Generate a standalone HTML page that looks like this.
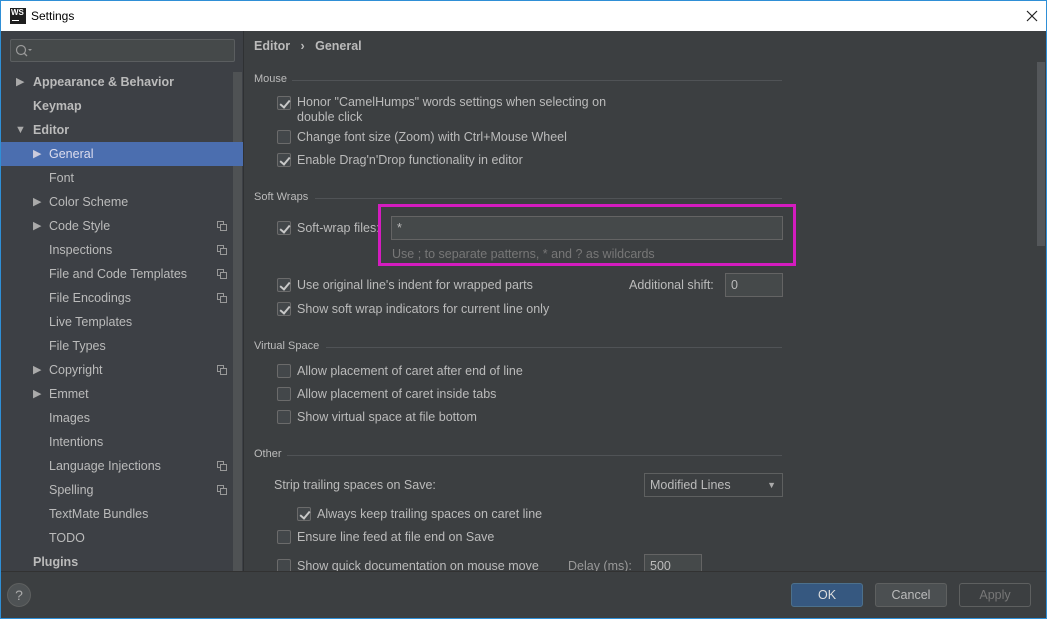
<!DOCTYPE html>
<html><head><meta charset="utf-8"><style>
*{margin:0;padding:0;box-sizing:border-box}
body{width:1047px;height:619px;overflow:hidden;background:#3c3f41;font-family:"Liberation Sans",sans-serif;font-size:12.5px;color:#bbbbbb;position:relative}
.a{position:absolute;white-space:nowrap}
#title{left:0;top:0;width:1047px;height:31px;background:#fff;border:1px solid #2f8fd6;border-bottom:none}
#frame{left:0;top:0;width:1047px;height:619px;border:1px solid #2f8fd6;pointer-events:none}
#side{left:1px;top:31px;width:242px;height:540px;background:#3d4045}
.it{position:absolute;height:24px;line-height:24px;left:0;width:232px}
.arr{position:absolute;font-size:11px;color:#aaa}
.cp{position:absolute;left:216px;top:7px;width:10px;height:10px}
.cb{position:absolute;width:14px;height:14px;border:1px solid #6b6b6b;background:#43474a;border-radius:2px}
.cb.c::after{content:"";position:absolute;left:4px;top:1px;width:4px;height:8px;border:solid #c8c8c8;border-width:0 2px 2px 0;transform:rotate(40deg)}
.sec{position:absolute;left:254px;font-size:11px;color:#bbb}
.ln{position:absolute;height:1px;background:#505356}
.inp{position:absolute;border:1px solid #646464;background:#45494a;color:#bbb;padding-left:5px}
.btn{position:absolute;top:583px;height:24px;width:72px;border:1px solid #5e6060;border-radius:3px;background:#4b4f51;text-align:center;line-height:22px}
</style></head><body>
<div class="a" id="title">
 <div class="a" style="left:9px;top:7px;width:16px;height:16px;background:#1e1e1e;color:#fff;font-size:8px;font-weight:bold;line-height:10px;padding-left:1px">WS<div style="position:absolute;left:2px;top:12px;width:7px;height:1px;background:#fff"></div></div>
 <div class="a" style="left:30px;top:8px;color:#000;font-size:12px">Settings</div>
 <svg class="a" style="left:1025px;top:9px" width="12" height="12"><path d="M1 1L11 11M11 1L1 11" stroke="#222" stroke-width="1.2"/></svg>
</div>
<div class="a" id="side">
 <div class="a" style="left:9px;top:8px;width:225px;height:23px;border:1px solid #5b5e60;border-radius:2px;background:#45494a"></div>
 <svg class="a" style="left:14px;top:13px" width="18" height="14"><circle cx="6" cy="6" r="4.5" fill="none" stroke="#999" stroke-width="1.2"/><path d="M9 9L12 12" stroke="#999" stroke-width="1.3"/><path d="M13 5h4l-2 2z" fill="#999"/></svg>
 <div class="a" style="left:232px;top:41px;width:9px;height:499px;background:#4f5254"></div>
 <div class="a" style="left:0;top:111px;width:242px;height:24px;background:#4b6eaf"></div>
</div>
<div class="a" style="left:1px;top:70px;width:232px;font-size:12.5px">
 <div class="it" style="top:0"><span class="arr" style="left:15px">▶</span><b style="position:absolute;left:32px">Appearance &amp; Behavior</b></div>
 <div class="it" style="top:24px"><b style="position:absolute;left:32px">Keymap</b></div>
 <div class="it" style="top:48px"><span class="arr" style="left:14px">▼</span><b style="position:absolute;left:32px">Editor</b></div>
 <div class="it" style="top:72px"><span class="arr" style="left:32px;color:#ccd">▶</span><span style="position:absolute;left:48px;color:#dde">General</span></div>
 <div class="it" style="top:96px"><span style="position:absolute;left:48px">Font</span></div>
 <div class="it" style="top:120px"><span class="arr" style="left:32px">▶</span><span style="position:absolute;left:48px">Color Scheme</span></div>
 <div class="it" style="top:144px"><span class="arr" style="left:32px">▶</span><span style="position:absolute;left:48px">Code Style</span><svg class="cp"><rect x=".5" y=".5" width="6" height="6" fill="none" stroke="#999"/><rect x="3.5" y="3.5" width="6" height="6" fill="#3d4045" stroke="#999"/></svg></div>
 <div class="it" style="top:168px"><span style="position:absolute;left:48px">Inspections</span><svg class="cp"><rect x=".5" y=".5" width="6" height="6" fill="none" stroke="#999"/><rect x="3.5" y="3.5" width="6" height="6" fill="#3d4045" stroke="#999"/></svg></div>
 <div class="it" style="top:192px"><span style="position:absolute;left:48px">File and Code Templates</span><svg class="cp"><rect x=".5" y=".5" width="6" height="6" fill="none" stroke="#999"/><rect x="3.5" y="3.5" width="6" height="6" fill="#3d4045" stroke="#999"/></svg></div>
 <div class="it" style="top:216px"><span style="position:absolute;left:48px">File Encodings</span><svg class="cp"><rect x=".5" y=".5" width="6" height="6" fill="none" stroke="#999"/><rect x="3.5" y="3.5" width="6" height="6" fill="#3d4045" stroke="#999"/></svg></div>
 <div class="it" style="top:240px"><span style="position:absolute;left:48px">Live Templates</span></div>
 <div class="it" style="top:264px"><span style="position:absolute;left:48px">File Types</span></div>
 <div class="it" style="top:288px"><span class="arr" style="left:32px">▶</span><span style="position:absolute;left:48px">Copyright</span><svg class="cp"><rect x=".5" y=".5" width="6" height="6" fill="none" stroke="#999"/><rect x="3.5" y="3.5" width="6" height="6" fill="#3d4045" stroke="#999"/></svg></div>
 <div class="it" style="top:312px"><span class="arr" style="left:32px">▶</span><span style="position:absolute;left:48px">Emmet</span></div>
 <div class="it" style="top:336px"><span style="position:absolute;left:48px">Images</span></div>
 <div class="it" style="top:360px"><span style="position:absolute;left:48px">Intentions</span></div>
 <div class="it" style="top:384px"><span style="position:absolute;left:48px">Language Injections</span><svg class="cp"><rect x=".5" y=".5" width="6" height="6" fill="none" stroke="#999"/><rect x="3.5" y="3.5" width="6" height="6" fill="#3d4045" stroke="#999"/></svg></div>
 <div class="it" style="top:408px"><span style="position:absolute;left:48px">Spelling</span><svg class="cp"><rect x=".5" y=".5" width="6" height="6" fill="none" stroke="#999"/><rect x="3.5" y="3.5" width="6" height="6" fill="#3d4045" stroke="#999"/></svg></div>
 <div class="it" style="top:432px"><span style="position:absolute;left:48px">TextMate Bundles</span></div>
 <div class="it" style="top:456px"><span style="position:absolute;left:48px">TODO</span></div>
 <div class="it" style="top:480px"><b style="position:absolute;left:32px">Plugins</b></div>
</div>

<div class="a" style="left:243px;top:31px;width:1px;height:540px;background:#2f3133"></div>
<div class="a" style="left:254px;top:39px;font-weight:bold;font-size:12.5px">Editor &nbsp;&nbsp;›&nbsp;&nbsp; General</div>
<div class="a" style="left:1037px;top:62px;width:8px;height:184px;background:#54575a"></div>

<div class="sec" style="top:73px">Mouse</div><div class="ln" style="left:292px;top:80px;width:490px"></div>
<div class="cb c" style="left:277px;top:96px"></div><div class="a" style="left:297px;top:95px;line-height:15px">Honor "CamelHumps" words settings when selecting on<br>double click</div>
<div class="cb" style="left:277px;top:130px"></div><div class="a" style="left:297px;top:130px">Change font size (Zoom) with Ctrl+Mouse Wheel</div>
<div class="cb c" style="left:277px;top:153px"></div><div class="a" style="left:297px;top:153px">Enable Drag'n'Drop functionality in editor</div>

<div class="sec" style="top:191px">Soft Wraps</div><div class="ln" style="left:315px;top:198px;width:467px"></div>
<div class="cb c" style="left:277px;top:221px"></div><div class="a" style="left:297px;top:221px">Soft-wrap files:</div>
<div class="a" style="left:378px;top:204px;width:418px;height:62px;border:3px solid #d41cbf"></div>
<div class="inp" style="left:391px;top:216px;width:392px;height:24px;line-height:22px">*</div>
<div class="a" style="left:392px;top:247px;color:#777">Use ; to separate patterns, * and ? as wildcards</div>
<div class="cb c" style="left:277px;top:278px"></div><div class="a" style="left:297px;top:278px">Use original line's indent for wrapped parts</div>
<div class="a" style="left:629px;top:278px">Additional shift:</div>
<div class="inp" style="left:725px;top:273px;width:58px;height:24px;line-height:22px">0</div>
<div class="cb c" style="left:277px;top:302px"></div><div class="a" style="left:297px;top:302px">Show soft wrap indicators for current line only</div>

<div class="sec" style="top:340px">Virtual Space</div><div class="ln" style="left:326px;top:347px;width:456px"></div>
<div class="cb" style="left:277px;top:364px"></div><div class="a" style="left:297px;top:364px">Allow placement of caret after end of line</div>
<div class="cb" style="left:277px;top:387px"></div><div class="a" style="left:297px;top:387px">Allow placement of caret inside tabs</div>
<div class="cb" style="left:277px;top:410px"></div><div class="a" style="left:297px;top:410px">Show virtual space at file bottom</div>

<div class="sec" style="top:448px">Other</div><div class="ln" style="left:287px;top:455px;width:495px"></div>
<div class="a" style="left:274px;top:478px">Strip trailing spaces on Save:</div>
<div class="inp" style="left:644px;top:473px;width:139px;height:24px;line-height:22px;background:#3c3f41;border-color:#5e6060">Modified Lines<span style="position:absolute;right:6px;font-size:9px;color:#aaa">▼</span></div>
<div class="cb c" style="left:297px;top:507px"></div><div class="a" style="left:317px;top:507px">Always keep trailing spaces on caret line</div>
<div class="cb" style="left:277px;top:530px"></div><div class="a" style="left:297px;top:530px">Ensure line feed at file end on Save</div>
<div class="cb" style="left:277px;top:559px"></div><div class="a" style="left:297px;top:559px">Show quick documentation on mouse move</div>
<div class="a" style="left:568px;top:559px;color:#999">Delay (ms):</div>
<div class="inp" style="left:644px;top:554px;width:58px;height:24px;line-height:22px">500</div>

<div class="a" style="left:1px;top:571px;width:1045px;height:47px;background:#3c3f41;border-top:1px solid #323232"></div>
<div class="a" style="left:7px;top:583px;width:24px;height:24px;border-radius:12px;background:#4e5254;border:1px solid #5e6060;text-align:center;line-height:22px;color:#aaa;font-size:14px">?</div>
<div class="btn" style="left:791px;background:#365880;border-color:#4c708c;color:#ddd">OK</div>
<div class="btn" style="left:875px">Cancel</div>
<div class="btn" style="left:959px;background:#3c3f41;color:#777">Apply</div>
<div class="a" id="frame"></div>
</body></html>
